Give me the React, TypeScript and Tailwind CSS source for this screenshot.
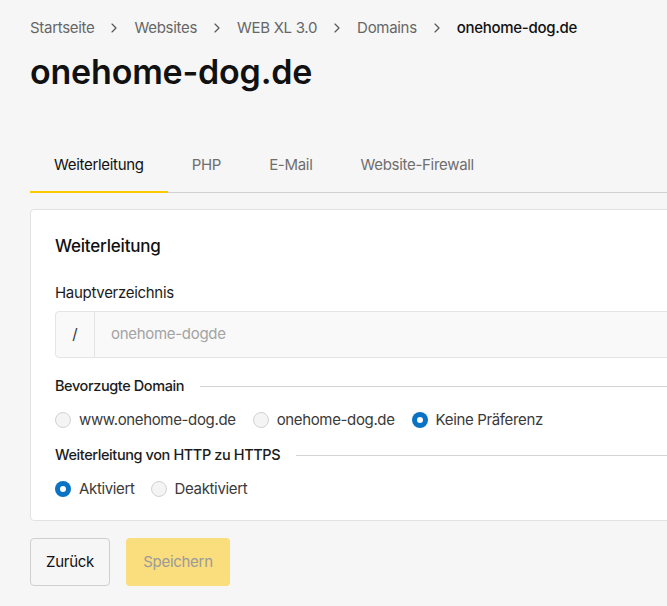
import { ChevronRight } from "lucide-react";

const CRUMBS = ["Startseite", "Websites", "WEB XL 3.0", "Domains"];
const TABS = ["Weiterleitung", "PHP", "E-Mail", "Website-Firewall"];

function Radio({ label, checked }: { label: string; checked?: boolean }) {
  return (
    <label className="flex items-center gap-2 cursor-pointer">
      {checked ? (
        <span className="h-4 w-4 rounded-full bg-[#0b73c4] flex items-center justify-center">
          <span className="h-[6px] w-[6px] rounded-full bg-white" />
        </span>
      ) : (
        <span className="h-4 w-4 rounded-full border border-[#d2d2d2] bg-[#f4f4f4]" />
      )}
      <span className="text-[15px] leading-5 text-[#3a3a3a] tracking-[-0.35px]">{label}</span>
    </label>
  );
}

function SectionHeading({ children }: { children: string }) {
  return (
    <div className="flex items-center gap-4">
      <span className="text-[14.5px] leading-5 font-medium text-[#1b1b1b] tracking-[-0.4px]">{children}</span>
      <div className="flex-1 h-px bg-[#d3d3d3]" />
    </div>
  );
}

export default function App() {
  return (
    <div className="w-[667px] h-[606px] overflow-hidden bg-[#f6f6f6] font-['Inter',sans-serif]">
      <div className="w-[760px] pl-[30px] pt-[18px]">
        <nav className="flex items-center text-[15px] leading-5 text-[#666] tracking-[-0.3px]">
          {CRUMBS.map((c) => (
            <span key={c} className="flex items-center">
              <span>{c}</span>
              <ChevronRight className="mx-3 h-4 w-4 text-[#555]" strokeWidth={1.75} />
            </span>
          ))}
          <span className="font-medium text-[#111]">onehome-dog.de</span>
        </nav>

        <h1 className="mt-[14px] text-[34px] leading-10 font-semibold text-[#111] tracking-[-0.2px]">
          onehome-dog.de
        </h1>

        <div className="mt-[63px] flex border-b border-[#d0d0d0]">
          {TABS.map((t, i) => (
            <div
              key={t}
              className={
                i === 0
                  ? "px-6 pb-4 -mb-px border-b-2 border-[#fcc800] text-[15px] leading-5 text-[#111] tracking-[-0.3px]"
                  : "px-6 pb-4 text-[15px] leading-5 text-[#6e6e6e] tracking-[-0.3px]"
              }
            >
              {t}
            </div>
          ))}
        </div>

        <div className="mt-4 rounded-[4px] border border-[#e2e2e2] bg-white px-6 pt-6 pb-[21px]">
          <h2 className="text-[17px] leading-6 font-medium text-[#111] tracking-[-0.2px]">Weiterleitung</h2>

          <div className="mt-[25px] text-[15px] leading-5 text-[#1b1b1b] tracking-[-0.3px]">Hauptverzeichnis</div>
          <div className="mt-2 flex h-[47px] rounded-[4px] border border-[#e4e4e4] bg-[#f9f9f9]">
            <div className="w-[39px] flex items-center justify-center border-r border-[#e4e4e4] text-[15px] text-[#333]">
              /
            </div>
            <div className="flex items-center pl-4 text-[15px] text-[#a3a3a3] tracking-[-0.3px]">onehome-dogde</div>
          </div>

          <div className="mt-[18px]">
            <SectionHeading>Bevorzugte Domain</SectionHeading>
          </div>
          <div className="mt-[14px] flex items-center gap-[17px]">
            <Radio label="www.onehome-dog.de" />
            <Radio label="onehome-dog.de" />
            <Radio label="Keine Präferenz" checked />
          </div>

          <div className="mt-[15px]">
            <SectionHeading>Weiterleitung von HTTP zu HTTPS</SectionHeading>
          </div>
          <div className="mt-[14px] flex items-center gap-4">
            <Radio label="Aktiviert" checked />
            <Radio label="Deaktiviert" />
          </div>
        </div>

        <div className="mt-[17px] flex gap-4">
          <button className="h-12 w-20 rounded-[4px] border border-[#cfcfcf] text-[15px] text-[#111] tracking-[-0.3px]">
            Zurück
          </button>
          <button className="h-12 w-[104px] rounded-[4px] bg-[#fadd7c] text-[15px] text-[#9a9a9a] tracking-[-0.3px]">
            Speichern
          </button>
        </div>
      </div>
    </div>
  );
}
